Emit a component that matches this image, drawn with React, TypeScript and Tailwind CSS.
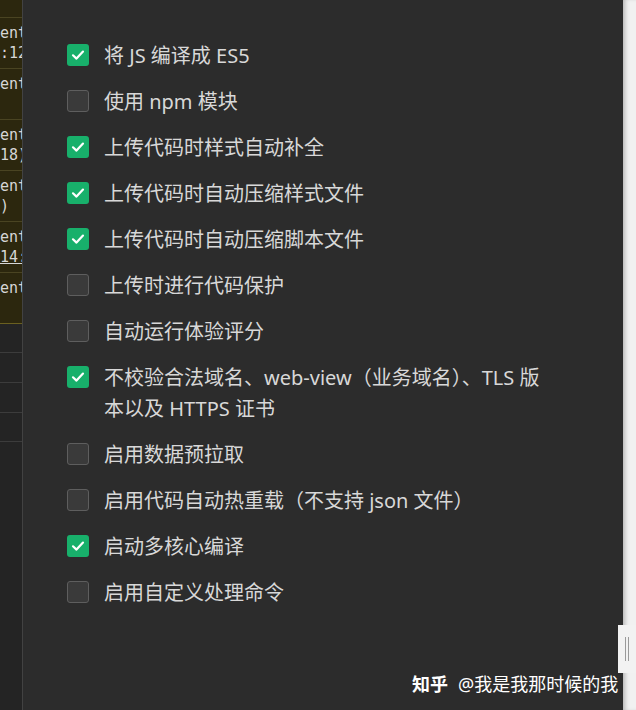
import React from "react";

const items: { label: string; checked: boolean }[] = [
  { label: "将 JS 编译成 ES5", checked: true },
  { label: "使用 npm 模块", checked: false },
  { label: "上传代码时样式自动补全", checked: true },
  { label: "上传代码时自动压缩样式文件", checked: true },
  { label: "上传代码时自动压缩脚本文件", checked: true },
  { label: "上传时进行代码保护", checked: false },
  { label: "自动运行体验评分", checked: false },
  { label: "不校验合法域名、web-view（业务域名）、TLS 版本以及 HTTPS 证书", checked: true },
  { label: "启用数据预拉取", checked: false },
  { label: "启用代码自动热重载（不支持 json 文件）", checked: false },
  { label: "启动多核心编译", checked: true },
  { label: "启用自定义处理命令", checked: false },
];

const logRows: { a: string; b: string; u?: boolean }[] = [
  { a: "entry", b: ":123" },
  { a: "entry", b: "" },
  { a: "entry", b: "18)" },
  { a: "entry", b: ")" },
  { a: "entry", b: "14:", u: true },
  { a: "entry", b: "" },
];

function Box({ checked }: { checked: boolean }) {
  if (checked) {
    return (
      <div className="mt-[4px] flex h-[22px] w-[22px] shrink-0 items-center justify-center rounded-[3px] bg-[#18b06b]">
        <svg width="16" height="16" viewBox="0 0 16 16" fill="none">
          <path d="M3 8.3 L6.5 11.6 L13 4.6" stroke="#ffffff" strokeWidth="2.2" strokeLinecap="round" strokeLinejoin="round" />
        </svg>
      </div>
    );
  }
  return <div className="mt-[4px] h-[22px] w-[22px] shrink-0 rounded-[3px] border border-[#5e5e5e] bg-[#3a3a3a]" />;
}

export default function App() {
  return (
    <div className="relative flex h-[710px] w-[636px] overflow-hidden bg-[#2c2c2c]" style={{ fontFamily: '"Noto Sans", "Noto Sans CJK SC", sans-serif' }}>
      {/* left log strip */}
      <div className="flex w-[22px] shrink-0 flex-col overflow-hidden bg-[#242424]" style={{ fontFamily: '"DejaVu Sans Mono", "Liberation Mono", monospace' }}>
        <div className="flex flex-col bg-[#2c270e]">
          <div className="h-[18px] border-b border-[#4a4422]" />
          {logRows.map((r, i) => (
            <div key={i} className={`flex h-[51px] flex-col justify-center whitespace-nowrap border-b text-[15px] leading-[20px] text-[#d6d6d6] ${i === logRows.length - 1 ? "border-[#6a6020]" : "border-[#4a4422]"}`}>
              <div>{r.a}</div>
              <div className={r.u ? "underline" : ""}>{r.b || "\u00a0"}</div>
            </div>
          ))}
        </div>
        <div className="h-[29px] border-b border-[#3c3c3c]" />
        <div className="h-[30px] border-b border-[#3c3c3c]" />
        <div className="h-[30px] border-b border-[#3c3c3c]" />
        <div className="h-[29px] border-b border-[#3c3c3c]" />
      </div>
      <div className="w-px shrink-0 bg-[#424242]" />

      {/* main panel */}
      <div className="flex-1 bg-[#2c2c2c] pl-[44px] pt-[40px]">
        <div className="flex flex-col gap-[15px]">
          {items.map((it, i) => (
            <div key={i} className="flex items-start gap-[15px]">
              <Box checked={it.checked} />
              <div className="max-w-[440px] text-[20px] leading-[31px] text-[#d8d8d8]">{it.label}</div>
            </div>
          ))}
        </div>
      </div>

      {/* right light strip */}
      <div className="w-[13px] shrink-0 bg-[#f1f1f1] shadow-[inset_4px_0_4px_-2px_rgba(0,0,0,0.25)]" />

      {/* resize handle */}
      <div className="absolute left-[618px] top-[625px] flex h-[48px] w-[18px] items-center justify-center gap-[2px] bg-[#f2f2f2]">
        <div className="h-[24px] w-px bg-[#9a9a9a]" />
        <div className="h-[24px] w-px bg-[#9a9a9a]" />
      </div>

      {/* watermark */}
      <div className="absolute left-[412px] top-[672px] flex items-center gap-[10px] text-[18px] leading-[24px] text-white">
        <span className="font-semibold">知乎</span>
        <span>@我是我那时候的我</span>
      </div>
    </div>
  );
}
